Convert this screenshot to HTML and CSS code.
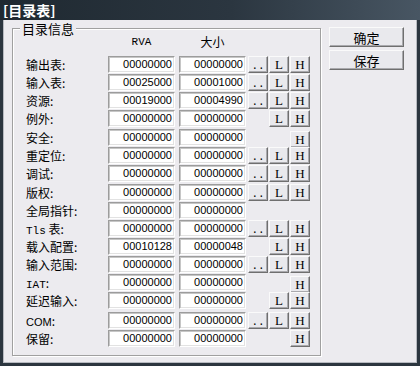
FILE: index.html
```html
<!DOCTYPE html>
<html lang="zh-CN">
<head>
    <meta charset="UTF-8">
    <title>目录表</title>
    <link rel="stylesheet" href="styles.css">
</head>
<body>
    <div class="window">
        <div class="titlebar">[目录表]</div>
        <div class="client">
            <div class="group">
                <div class="group-title">目录信息</div>

                <div class="head">
                    <span class="col-rva">RVA</span>
                    <span class="col-size">大小</span>
                </div>

                <div class="rows">
                    <div class="row">
                        <span class="label">输出表:</span>
                        <span class="field">00000000</span><span class="field">00000000</span>
                        <button class="btn dots">..</button><button class="btn lo">L</button><button class="btn hi">H</button>
                    </div>
                    <div class="row">
                        <span class="label">输入表:</span>
                        <span class="field">00025000</span><span class="field">00001000</span>
                        <button class="btn dots">..</button><button class="btn lo">L</button><button class="btn hi">H</button>
                    </div>
                    <div class="row">
                        <span class="label">资源:</span>
                        <span class="field">00019000</span><span class="field">00004990</span>
                        <button class="btn dots">..</button><button class="btn lo">L</button><button class="btn hi">H</button>
                    </div>
                    <div class="row">
                        <span class="label">例外:</span>
                        <span class="field">00000000</span><span class="field">00000000</span>
                        <button class="btn lo">L</button><button class="btn hi">H</button>
                    </div>
                    <div class="row row-gap">
                        <span class="label">安全:</span>
                        <span class="field">00000000</span><span class="field">00000000</span>
                        <button class="btn hi low">H</button>
                    </div>
                    <div class="row">
                        <span class="label">重定位:</span>
                        <span class="field">00000000</span><span class="field">00000000</span>
                        <button class="btn dots">..</button><button class="btn lo">L</button><button class="btn hi">H</button>
                    </div>
                    <div class="row">
                        <span class="label">调试:</span>
                        <span class="field">00000000</span><span class="field">00000000</span>
                        <button class="btn dots">..</button><button class="btn lo">L</button><button class="btn hi">H</button>
                    </div>
                    <div class="row row-gap">
                        <span class="label">版权:</span>
                        <span class="field">00000000</span><span class="field">00000000</span>
                        <button class="btn dots">..</button><button class="btn lo">L</button><button class="btn hi">H</button>
                    </div>
                    <div class="row">
                        <span class="label">全局指针:</span>
                        <span class="field">00000000</span><span class="field">00000000</span>
                    </div>
                    <div class="row">
                        <span class="label"><span class="latin">Tls</span> 表:</span>
                        <span class="field">00000000</span><span class="field">00000000</span>
                        <button class="btn dots">..</button><button class="btn lo">L</button><button class="btn hi">H</button>
                    </div>
                    <div class="row">
                        <span class="label">载入配置:</span>
                        <span class="field">00010128</span><span class="field">00000048</span>
                        <button class="btn lo">L</button><button class="btn hi">H</button>
                    </div>
                    <div class="row">
                        <span class="label">输入范围:</span>
                        <span class="field">00000000</span><span class="field">00000000</span>
                        <button class="btn dots">..</button><button class="btn lo">L</button><button class="btn hi">H</button>
                    </div>
                    <div class="row">
                        <span class="label"><span class="latin">IAT</span>:</span>
                        <span class="field">00000000</span><span class="field">00000000</span>
                        <button class="btn hi low">H</button>
                    </div>
                    <div class="row">
                        <span class="label">延迟输入:</span>
                        <span class="field">00000000</span><span class="field">00000000</span>
                        <button class="btn lo">L</button><button class="btn hi">H</button>
                    </div>
                    <div class="row row-com">
                        <span class="label"><span class="sans">COM</span>:</span>
                        <span class="field">00000000</span><span class="field">00000000</span>
                        <button class="btn dots">..</button><button class="btn lo">L</button><button class="btn hi">H</button>
                    </div>
                    <div class="row">
                        <span class="label">保留:</span>
                        <span class="field">00000000</span><span class="field">00000000</span>
                        <button class="btn hi">H</button>
                    </div>
                </div>
            </div>

            <div class="side">
                <button class="btn big">确定</button>
                <button class="btn big">保存</button>
            </div>
        </div>
    </div>
</body>
</html>
```

FILE: styles.css
```css
body {
    margin: 0;
    font-family: "Noto Sans CJK SC", sans-serif;
    font-size: 12px;
    color: #000;
}

.window {
    width: 420px;
    height: 366px;
    box-sizing: border-box;
    padding: 0 3px 3px;
    background: #2c363f;
    display: flex;
    flex-direction: column;
}

.titlebar {
    height: 20px;
    margin: 0 -3px;
    padding-left: 3px;
    background: linear-gradient(to right, #1f2931 0%, #2b3640 55%, #485663 100%);
    color: white;
    font-size: 14px;
    font-weight: bold;
    line-height: 20px;
}

.client {
    flex: 1;
    display: flex;
    align-items: flex-start;
    background: #ecebef;
    border: 1px solid #b7bac0;
    border-top: none;
}

/* etched group box */
.group {
    position: relative;
    width: 309px;
    height: 328px;
    box-sizing: border-box;
    margin: 8px 0 0 8px;
    padding: 6px 0 0 13px;
    border: 1px solid #a0a0a0;
    box-shadow: inset 1px 1px 0 #fff, 1px 1px 0 #fff;
}

.group-title {
    position: absolute;
    top: -8px;
    left: 7px;
    padding: 0 2px;
    background: #ecebef;
    font-size: 13px;
    line-height: 15px;
}

.head,
.row {
    display: grid;
    grid-template-columns: 82px 67px 71px 22px 21px 21px;
    justify-items: end;
}

.head {
    height: 14px;
    line-height: 14px;
    margin-bottom: 7px;
}

.col-rva,
.col-size {
    width: 67px;
    text-align: center;
}

.col-rva {
    grid-column: 2;
    font-family: "Liberation Mono", monospace;
    font-size: 11px;
}

.col-size {
    grid-column: 3;
}

.rows {
    display: flex;
    flex-direction: column;
    gap: 1px;
}

.row {
    height: 17px;
    align-items: start;
}

.row-gap {
    margin-top: 1px;
}

.row-com {
    margin-top: 2px;
}

.label {
    justify-self: start;
    line-height: 17px;
    white-space: nowrap;
}

.latin {
    font-family: "Liberation Mono", monospace;
    font-size: 11px;
}

.sans {
    font-family: "Liberation Sans", sans-serif;
    font-size: 11px;
}

.field {
    width: 67px;
    height: 17px;
    box-sizing: border-box;
    padding-right: 2px;
    background: white;
    border: 1px solid;
    border-color: #9c9c9c #ffffff #ffffff #9c9c9c;
    box-shadow: inset 1px 1px 0 #c6c6c6, inset -1px -1px 0 #e2e2e2;
    font-family: "Liberation Sans", sans-serif;
    font-size: 11px;
    line-height: 15px;
    text-align: right;
}

.btn {
    width: 20px;
    height: 17px;
    box-sizing: border-box;
    margin: 0;
    padding: 0;
    background: #e9e9ed;
    border: 1px solid;
    border-color: #fafafa #6f6f6f #6f6f6f #fafafa;
    box-shadow: inset -1px -1px 0 #a9a9ad;
    font-family: "Liberation Serif", serif;
    font-size: 13px;
    line-height: 14px;
    color: #000;
}

.dots {
    grid-column: 4;
    font-family: "Liberation Mono", monospace;
    font-size: 11px;
    line-height: 18px;
}

.lo { grid-column: 5; }
.hi { grid-column: 6; }

.low {
    margin-top: 2px;
}

.side {
    display: flex;
    flex-direction: column;
    gap: 3px;
    margin: 7px 0 0 8px;
}

.btn.big {
    width: 75px;
    height: 20px;
    font-family: "Noto Sans CJK SC", sans-serif;
    font-size: 13px;
    line-height: 17px;
}
```
